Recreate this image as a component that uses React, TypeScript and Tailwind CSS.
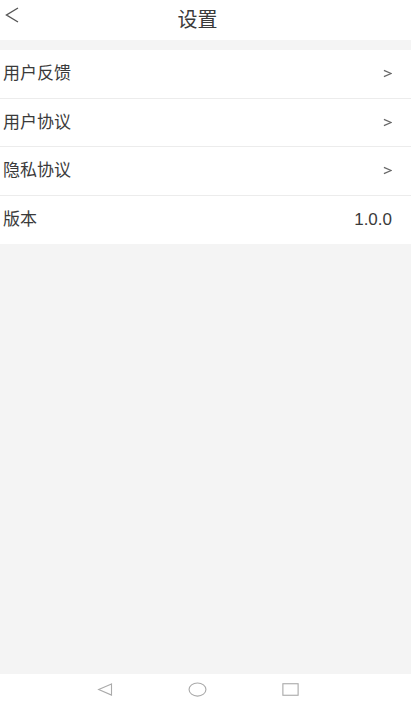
/** Settings screen: header, list of entries, android nav bar. */

const items = [
  { label: "用户反馈", arrow: true },
  { label: "用户协议", arrow: true },
  { label: "隐私协议", arrow: true },
  { label: "版本", value: "1.0.0" },
];

function Chevron({ className }: { className?: string }) {
  return (
    <svg viewBox="0 0 10 10" className={className} fill="none" stroke="currentColor" strokeWidth="1.3">
      <path d="M1 1.5 L9 5 L1 8.5" />
    </svg>
  );
}

export default function App() {
  return (
    <div
      className="flex h-[705px] w-[411px] flex-col overflow-hidden bg-[#f4f4f4] text-[#333]"
      style={{ fontFamily: '"Liberation Sans", "Noto Sans CJK SC", sans-serif' }}
    >
      {/* Header */}
      <div className="relative flex h-[40px] shrink-0 items-center justify-center bg-white">
        <svg
          viewBox="0 0 14 16"
          className="absolute left-[5px] top-[7px] h-[16px] w-[14px] text-[#555]"
          fill="none"
          stroke="currentColor"
          strokeWidth="1.4"
        >
          <path d="M13 1 L1.5 8 L13 15" />
        </svg>
        <span className="mr-[16px] text-[20px] leading-none text-[#3a3a3a]">设置</span>
      </div>

      {/* List */}
      <div className="mt-[10px] shrink-0 bg-white">
        {items.map((item, i) => (
          <div
            key={item.label}
            className={`flex h-[48.5px] items-center justify-between pl-[3px] pr-[19px] ${
              i < items.length - 1 ? "border-b border-[#ececec]" : ""
            }`}
          >
            <span className="text-[17px] leading-none text-[#3a3a3a]">{item.label}</span>
            {item.arrow ? (
              <Chevron className="h-[9px] w-[9px] text-[#666]" />
            ) : (
              <span className="text-[17px] leading-none text-[#3a3a3a]">{item.value}</span>
            )}
          </div>
        ))}
      </div>

      <div className="flex-1" />

      {/* Nav bar */}
      <div className="flex h-[31px] shrink-0 items-center bg-white">
        <div className="ml-[97px] flex items-center gap-[75px] text-[#aaa]">
          <svg viewBox="0 0 16 14" className="h-[13px] w-[16px]" fill="none" stroke="currentColor" strokeWidth="1.2">
            <path d="M15 1 L1.2 7 L15 13 Z" />
          </svg>
          <svg viewBox="0 0 20 16" className="h-[15px] w-[19px]" fill="none" stroke="currentColor" strokeWidth="1.2">
            <ellipse cx="10" cy="8" rx="9" ry="7" />
          </svg>
          <svg viewBox="0 0 18 14" className="h-[13px] w-[17px]" fill="none" stroke="currentColor" strokeWidth="1.2">
            <rect x="0.8" y="0.8" width="16.4" height="12.4" />
          </svg>
        </div>
      </div>
    </div>
  );
}
